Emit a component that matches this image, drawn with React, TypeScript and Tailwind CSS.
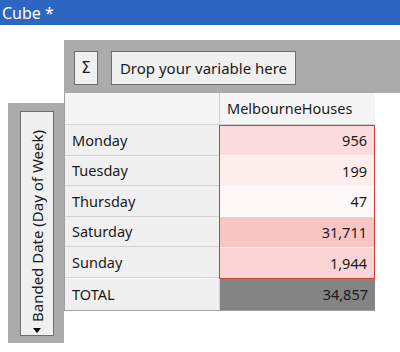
type Row = { day: string; count: string; tint: string };

// per-day heat tint, stronger red for bigger counts
const ROWS: Row[] = [
  { day: "Monday", count: "956", tint: "bg-[#fcdcdc]" },
  { day: "Tuesday", count: "199", tint: "bg-[#fdeded]" },
  { day: "Thursday", count: "47", tint: "bg-[#fdf8f7]" },
  { day: "Saturday", count: "31,711", tint: "bg-[#f8c5c5]" },
  { day: "Sunday", count: "1,944", tint: "bg-[#fbd5d5]" },
];

const FONT = "font-['Noto_Sans','Open_Sans',sans-serif]";

export default function App() {
  return (
    <div className={`w-[400px] h-[352px] bg-white overflow-hidden text-[#1a1a1a] ${FONT}`}>
      {/* Title bar */}
      <div className="h-[25px] bg-[#2d66c1] flex items-center px-[2px]">
        <span className="text-white text-[16px] leading-none">Cube *</span>
      </div>

      <div className="flex pt-[15px]">
        {/* Row variable strip */}
        <div className="ml-[8px] mt-[63px] w-[56px] h-[240px] bg-[#ababab] pl-[12px] pr-[10px] pt-[8px] pb-[7px]">
          <div className="h-full bg-[#f0f0f0] border border-[#6e6e6e] flex flex-col items-center justify-end pb-[2px]">
            <div className="[writing-mode:vertical-rl] rotate-180 text-[15px] leading-[16px] whitespace-nowrap">
              Banded Date (Day of Week)
            </div>
            <svg className="block mt-[6px]" width="8" height="5" viewBox="0 0 8 5">
              <polygon points="0,0 8,0 4,5" fill="#000" />
            </svg>
          </div>
        </div>

        <div className="flex-1 flex flex-col">
          {/* Column / measure drop zone */}
          <div className="h-[53px] bg-[#ababab] flex items-start gap-[13px] pl-[10px] pt-[11px]">
            <button className="w-[24px] h-[34px] bg-[#f0f0f0] border border-[#6e6e6e] flex items-center justify-center text-[15px] leading-none font-['DejaVu_Sans',sans-serif]">
              Σ
            </button>
            <button className="w-[185px] h-[34px] bg-[#f0f0f0] border border-[#6e6e6e] text-[15px] leading-none">
              Drop your variable here
            </button>
          </div>

          {/* Pivot table */}
          <div className="w-[311px] border-l border-b border-r border-[#a0a0a0] text-[14.5px] leading-none">
            <div className="grid grid-cols-[155px_155px] h-[32px]">
              <div className="bg-[#f5f5f5] border-r border-b border-[#d2d2d2]" />
              <div className="bg-[#f5f5f5] border-b border-[#d2d2d2] flex items-center pl-[7px]">
                MelbourneHouses
              </div>
            </div>
            <div className="grid grid-cols-[155px_155px]">
              <div className="flex flex-col">
                {ROWS.map((r) => (
                  <div key={r.day} className="h-[30.6px] bg-[#f0f0f0] border-b border-[#d2d2d2] flex items-center pl-[7px]">
                    {r.day}
                  </div>
                ))}
              </div>
              <div className="flex flex-col border border-[#d43c3c] -ml-px">
                {ROWS.map((r, i) => (
                  <div
                    key={r.day}
                    className={`h-[30.4px] ${r.tint} ${i < ROWS.length - 1 ? "border-b border-white/70" : ""} flex items-center justify-end pr-[7px]`}
                  >
                    {r.count}
                  </div>
                ))}
              </div>
            </div>
            <div className="grid grid-cols-[155px_155px] h-[31px]">
              <div className="bg-[#f0f0f0] border-r border-[#d2d2d2] flex items-center pl-[7px]">TOTAL</div>
              <div className="bg-[#848484] flex items-center justify-end pr-[7px]">34,857</div>
            </div>
          </div>
        </div>
      </div>
    </div>
  );
}
